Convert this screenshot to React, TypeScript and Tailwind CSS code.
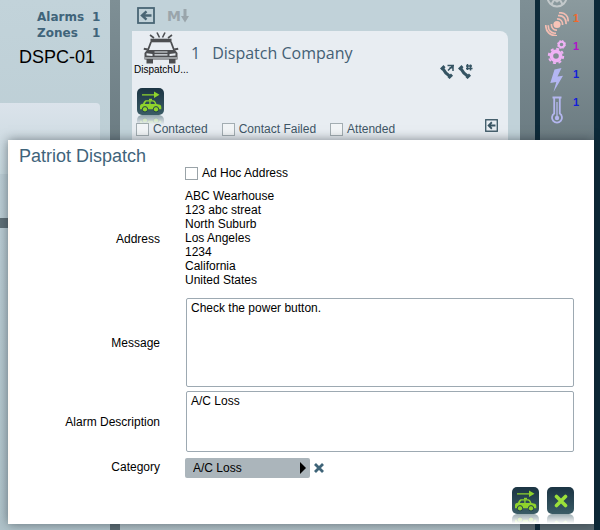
import type { ReactNode } from 'react';

const addressLines = [
  'ABC Wearhouse',
  '123 abc streat',
  'North Suburb',
  'Los Angeles',
  '1234',
  'California',
  'United States',
];

const contactStates = [
  { id: 'contacted', label: 'Contacted' },
  { id: 'contact-failed', label: 'Contact Failed' },
  { id: 'attended', label: 'Attended' },
];

function BoxedArrow({ className }: { className: string }) {
  return (
    <svg viewBox="0 0 18 17" preserveAspectRatio="none" className={className} fill="none" stroke="currentColor">
      <rect x="1" y="1" width="16" height="15" strokeWidth="1.8" />
      <path d="M14.500 8.500H5M9.500 4.300L5 8.500l4.500 4.200" strokeWidth="2.400" />
    </svg>
  );
}

function PoliceCar() {
  return (
    <svg viewBox="0 0 36 32" className="h-8 w-9" fill="none" stroke="#4c4e51">
      <path d="M7 3l4 3M14 0.500l2.500 5M22 0.500l-2.500 5M29 3l-4 3" strokeWidth="1.600" />
      <path d="M7.500 8.500h21" strokeWidth="3.600" />
      <path d="M8 10L5 18M28 10l3 8" strokeWidth="1.800" />
      <path d="M.8 16.800l4 .8M35.200 16.800l-4 .8" strokeWidth="2" />
      <path d="M4 18h28l2.500 3v6.500h-33V21z" fill="#4c4e51" stroke="none" />
      <path d="M3.500 27h6.500v4.500H3.500zM26 27h6.500v4.500H26z" fill="#4c4e51" stroke="none" />
      <path
        d="M3.500 21.300l6 .8v2l-6-.6zM32.500 21.300l-6 .8v2l6-.6zM11.500 19.500h13v1h-13zM11.500 22.200h13v1.300h-13zM2 25.600h32v1H2z"
        fill="#e8edf2"
        stroke="none"
      />
    </svg>
  );
}

function DispatchCar() {
  return (
    <svg viewBox="0 0 27 27" className="size-[27px]" fill="#8fd32c">
      <path d="M5 6.200h12V3.500l5.500 3.300L17 10V7.500H5z" />
      <path d="M12 10.800h3v1.700h-3z" />
      <path
        fillRule="evenodd"
        d="M9 12.300h7c1.500 0 2.500 1 3.500 3.700l3.500.8c1 .4 1.300 1.300 1.300 2.700v1.800H3v-3c0-1.600 1-2.300 3-2.600.8-2 1.700-3.400 3-3.400zM9.500 13.600c-.8.4-1.300 1.200-1.700 2.300h4.500v-2.300zM13.600 13.600v2.300h4.300c-.6-1.500-1.200-2.300-2.200-2.300z"
      />
      <circle cx="8" cy="21.300" r="2.700" stroke="#24424f" strokeWidth="1" />
      <circle cx="19" cy="21.300" r="2.700" stroke="#24424f" strokeWidth="1" />
    </svg>
  );
}

function GlossyButton({ label, className = '', children }: { label: string; className?: string; children: ReactNode }) {
  return (
    <button
      type="button"
      aria-label={label}
      className={`flex size-[27px] items-center justify-center rounded-[5px] bg-linear-to-b from-[#1b3443] to-[#3a5c66] [-webkit-box-reflect:below_0_linear-gradient(transparent_65%,rgba(0,0,0,0.5))] ${className}`}
    >
      {children}
    </button>
  );
}

function Phone({ outgoing = false }: { outgoing?: boolean }) {
  return (
    <svg viewBox="0 0 15 15" className="size-[15px]" fill="none" stroke="#355463">
      <path d="M2.800 4.500c1.500 3 3.700 5.500 6.700 7.500" strokeWidth="3" />
      <path d="M1 5.500l3.500-3.300M8.500 14l3.500-3.300" strokeWidth="3" />
      <path
        d={outgoing ? 'M8 2h6M8 4.500h6.500M9.500 0v6M12.500 .5v6' : 'M7.500 1.500H14M13 1v6M8 6.500l5-5M9.500 3.800h4'}
        strokeWidth="1.500"
      />
    </svg>
  );
}

function Signal() {
  return (
    <svg viewBox="0 0 24 24" className="size-6" fill="none" stroke="#f3bdb2" strokeWidth="1.700">
      <circle cx="12" cy="12.500" r="3.600" fill="#f8c4b8" stroke="none" />
      <path d="M12 7c3.400-.4 6 2.500 5.500 6M13 3.600c5-.6 8.500 3 8 8.500M14 .8c6-.4 9.800 3.400 9 8.600" />
      <path d="M12 18c-3.400.4-6-2.500-5.500-6M11 21.200c-5 .6-8-3.300-7.700-8M12 23.800C5 24 .5 19.300.8 13" />
    </svg>
  );
}

function Gears() {
  return (
    <svg viewBox="0 0 24 24" className="size-6" fill="none" stroke="#efb2f5">
      <circle cx="11" cy="16" r="4.600" strokeWidth="3.600" />
      <circle cx="11" cy="16" r="7.200" strokeWidth="2" strokeDasharray="3 2.650" />
      <circle cx="16.500" cy="4.500" r="2.800" strokeWidth="2" />
      <circle cx="16.500" cy="4.500" r="4" strokeWidth="1" strokeDasharray="1.800 1.340" />
    </svg>
  );
}

function Bolt() {
  return (
    <svg viewBox="0 0 24 24" className="size-6" fill="#b3b6f2">
      <path d="M9.500 1.500L16.500 0l-4 8.500 5.500-.8L8.500 24l2.800-10-6 1z" />
    </svg>
  );
}

function Thermometer() {
  return (
    <svg viewBox="0 0 24 28" className="h-7 w-6" fill="none" stroke="#b3b6ee">
      <path d="M7.500 1.500h9M9.200 2v15.500a5 5 0 1 0 5.600 0V2" strokeWidth="1.800" />
      <path d="M12 6v14" strokeWidth="1.300" />
      <circle cx="12" cy="22" r="2.200" fill="#b3b6ee" stroke="none" />
    </svg>
  );
}

const alerts = [
  { name: 'signal', icon: <Signal />, color: 'text-[#f0682c]' },
  { name: 'system', icon: <Gears />, color: 'text-[#b011c8]' },
  { name: 'power', icon: <Bolt />, color: 'text-[#1420d8]' },
  { name: 'temperature', icon: <Thermometer />, color: 'text-[#1420d8]' },
];

function Sidebar() {
  return (
    <aside className="flex w-[110px] shrink-0 flex-col bg-linear-to-b from-[#c2d3da] to-[#b0c3ca]">
      <div className="flex h-[103px] flex-col pt-[9px]">
        <dl className="grid grid-cols-[55px_auto] pl-[37px] font-['DejaVu_Sans',sans-serif] text-xs leading-4 font-bold text-[#40647a]">
          <dt>Alarms</dt>
          <dd>1</dd>
          <dt>Zones</dt>
          <dd>1</dd>
        </dl>
        <p className="pt-[6px] pl-[19px] text-lg leading-5">DSPC-01</p>
      </div>
      <div className="mr-[10px] h-[71px] rounded-tr bg-linear-to-b from-[#dbe3eb] to-[#c6d7dd]" />
      <div className="mt-11 h-[10px] bg-[#5f6f76]" />
    </aside>
  );
}

function DispatchCard() {
  return (
    <section className="mx-3 mb-3 flex-1 rounded-tr-lg bg-[#e8edf2] pr-[10px] pl-[2px]">
      <div className="flex h-12">
        <div className="w-[57px] shrink-0">
          <div className="flex justify-center pt-[1px] pr-1">
            <PoliceCar />
          </div>
          <p className="text-[10px] leading-3">DispatchU...</p>
        </div>
        <h2 className="flex gap-3 pt-[10px] font-['Open_Sans',sans-serif] text-base leading-6 text-[#446075]">
          <span>1</span>
          <span>Dispatch Company</span>
        </h2>
        <div className="mr-[25px] ml-auto flex gap-[3px] self-end">
          <Phone />
          <Phone outgoing />
        </div>
      </div>
      <GlossyButton label="Dispatch unit" className="mt-[9px] ml-[3px]">
        <DispatchCar />
      </GlossyButton>
      <div className="mt-[6px] flex h-4 items-center gap-[14px] pl-[2px] text-xs text-[#3f5666]">
        {contactStates.map((state) => (
          <label key={state.id} htmlFor={state.id} className="flex items-center gap-1 whitespace-nowrap">
            <input id={state.id} type="checkbox" className="size-[13px] appearance-none border border-[#a3adb2] bg-[#f2f5f7]" />
            {state.label}
          </label>
        ))}
        <button type="button" aria-label="Back" className="mb-2 ml-auto text-[#3a5664]">
          <BoxedArrow className="size-[13px]" />
        </button>
      </div>
    </section>
  );
}

function AlertBar() {
  return (
    <aside className="w-[54px] shrink-0 bg-linear-to-b from-[#8b9a9e] from-0% to-[#5c6c73] to-40%">
      <svg viewBox="0 0 22 8" className="ml-[6px] h-2 w-[22px]" fill="none" stroke="#c3c9cb" strokeWidth="2">
        <circle cx="11" cy="-3" r="9.500" />
        <path d="M8 0L5 5M14 0l3 5M9 0l2 1.500L13 0z" />
      </svg>
      <ul className="flex flex-col gap-1 pt-1">
        {alerts.map((alert) => (
          <li key={alert.name} className="flex pl-[5px]">
            {alert.icon}
            <span className={`pl-1 text-[11px] leading-3 font-bold ${alert.color}`}>1</span>
          </li>
        ))}
      </ul>
    </aside>
  );
}

function DispatchDialog() {
  return (
    <form
      role="dialog"
      aria-labelledby="dialog-title"
      className="absolute top-[140px] right-[6px] left-2 border-l-2 border-[#fdfaf6] bg-white pr-5 pb-[10px] text-xs shadow-[0_0_10px_rgba(20,30,35,0.5)]"
    >
      <h1 id="dialog-title" className="pt-[6px] pl-[9px] text-lg leading-5 text-[#3f647b]">
        Patriot Dispatch
      </h1>
      <label htmlFor="ad-hoc" className="ml-[175px] flex h-[14px] w-fit items-center gap-1">
        <input id="ad-hoc" type="checkbox" className="size-[13px] appearance-none border border-[#9aa3a8]" />
        Ad Hoc Address
      </label>
      <div className="grid grid-cols-[150px_1fr] items-center gap-x-[25px]">
        <span className="text-right">Address</span>
        <address className="pt-[9px] pb-[11px] leading-[14px] not-italic">
          {addressLines.map((line) => (
            <div key={line}>{line}</div>
          ))}
        </address>
        <label htmlFor="message" className="pb-1 text-right">
          Message
        </label>
        <textarea
          id="message"
          defaultValue="Check the power button."
          className="mb-1 ml-[1px] block h-[89px] resize-none rounded-xs border border-[#9da9b2] px-1 py-[2px] leading-[14px]"
        />
        <label htmlFor="description" className="text-right">
          Alarm Description
        </label>
        <textarea
          id="description"
          defaultValue="A/C Loss"
          className="ml-[1px] block h-[61px] resize-none rounded-xs border border-[#9da9b2] px-1 py-[2px] leading-[14px]"
        />
        <label htmlFor="category" className="pt-1 text-right">
          Category
        </label>
        <div className="flex items-center gap-1 pt-[6px]">
          <div className="grid w-[125px] items-center">
            <select
              id="category"
              className="col-start-1 row-start-1 h-5 appearance-none rounded-xs bg-[#abb5bb] px-2 text-xs text-black"
            >
              <option>A/C Loss</option>
            </select>
            <svg viewBox="0 0 6 12" className="pointer-events-none col-start-1 row-start-1 mr-1 h-3 w-[6px] justify-self-end">
              <path d="M0 0l6 6-6 6z" />
            </svg>
          </div>
          <button type="button" aria-label="Clear category">
            <svg viewBox="0 0 10 10" className="size-[10px]" stroke="#3f6478" strokeWidth="2.800">
              <path d="M1 1l8 8M9 1L1 9" />
            </svg>
          </button>
        </div>
      </div>
      <div className="mt-[9px] flex justify-end gap-2">
        <GlossyButton label="Dispatch">
          <DispatchCar />
        </GlossyButton>
        <GlossyButton label="Cancel">
          <svg viewBox="0 0 14 14" className="size-[14px]" stroke="#9be03a" strokeWidth="3.600" strokeLinecap="round">
            <path d="M2.500 2.500l9 9M11.500 2.500l-9 9" />
          </svg>
        </GlossyButton>
      </div>
    </form>
  );
}

export default function App() {
  return (
    <div className="relative flex h-screen min-h-fit overflow-hidden bg-[#0d2a39] font-['Liberation_Sans',Arial,sans-serif] text-black">
      <Sidebar />
      <div className="w-[10px] shrink-0 bg-linear-to-b from-[#7e8f95] from-0% to-[#5c6c73] to-50%" />
      <main className="flex min-w-0 flex-1 flex-col bg-linear-to-b from-[#c1d2d9] from-30% to-[#b0c0c6]">
        <div className="flex h-[31px] items-center gap-3 pl-[17px] text-[#496574]">
          <button type="button" aria-label="Collapse">
            <BoxedArrow className="h-[17px] w-[18px]" />
          </button>
          <button type="button" className="flex items-center text-[#9aa5ab]">
            <span className="font-['DejaVu_Sans',sans-serif] text-sm leading-4 font-bold">M</span>
            <svg viewBox="0 0 8 14" className="h-[14px] w-2" fill="currentColor">
              <path d="M2.500 0h3v7H8l-4 6.500L0 7h2.500z" />
            </svg>
          </button>
        </div>
        <DispatchCard />
      </main>
      <div className="w-[15px] shrink-0 bg-linear-to-b from-[#7e8f95] from-0% to-[#5c6c73] to-50%" />
      <div className="w-[5px] shrink-0" />
      <AlertBar />
      <div className="w-[6px] shrink-0" />
      <DispatchDialog />
    </div>
  );
}
